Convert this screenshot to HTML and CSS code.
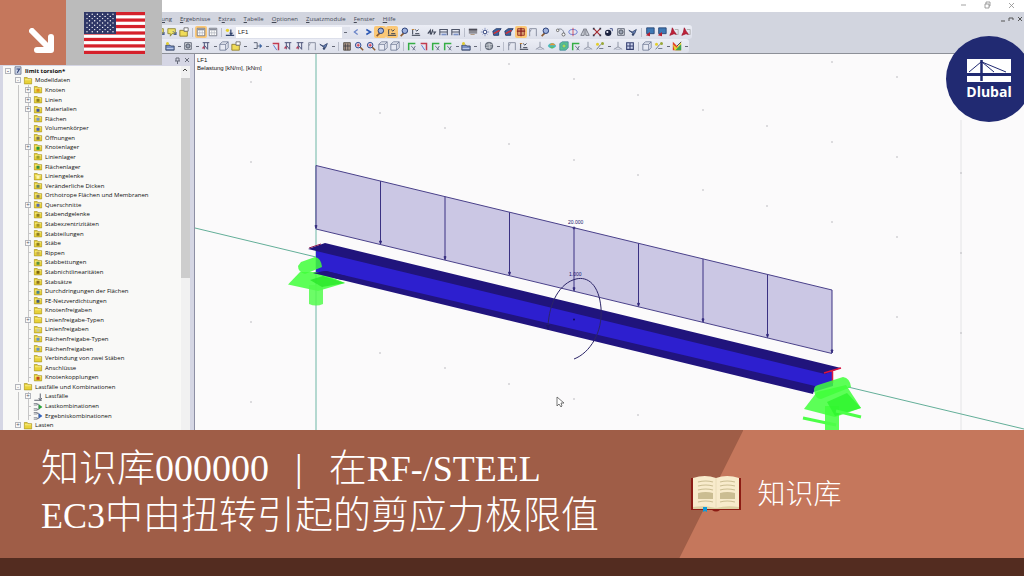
FILE: index.html
```
<!DOCTYPE html>
<html lang="zh-CN">
<head>
    <meta charset="UTF-8">
    <meta name="viewport" content="width=device-width, initial-scale=1.0">
    <title>知识库 | Dlubal</title>
    <link rel="stylesheet" href="styles.css">
</head>
<body>
    <svg class="sprite" aria-hidden="true">
        <symbol id="folder" viewBox="0 0 12 12"><path d="M1 2h4l1 1.500h5v7H1z" fill="#e8d23a" stroke="#a08a18" stroke-width=".8"/><path d="M2 5h8" stroke="#fff6a0"/></symbol>
        <symbol id="note" viewBox="0 0 12 12"><path d="M1 2h9v6H6l-2 3V8H1z" fill="#f0e468" stroke="#8a8430"/><path d="M7 5l4 4M11 6v3H8" stroke="#37508c" fill="none"/></symbol>
        <symbol id="open" viewBox="0 0 12 12"><path d="M1 4h4l1 1h4v6H1z" fill="#f0dc5a" stroke="#8c7a28"/><path d="M6 1h5v4H6z" fill="#fff" stroke="#666"/></symbol>
        <symbol id="table" viewBox="0 0 12 12"><path d="M1.500 1.500h9v9h-9z" fill="#fff" stroke="#6b6f7c"/><path d="M2 3h8" stroke="#8b8f9c" stroke-width="2"/><path d="M4.500 4v6M7.500 4v6M2 7h8" stroke="#a9adb8" stroke-width=".8"/></symbol>
        <symbol id="load" viewBox="0 0 12 12"><circle cx="3" cy="4" r="2" fill="#e8d028"/><path d="M1 10h10M7 3v6" stroke="#34466e" stroke-width="1.500"/><path d="M5 7l2 3 3-3z" fill="#34466e"/></symbol>
        <symbol id="prev" viewBox="0 0 12 12"><path d="M8 3L4 6l4 3" fill="none" stroke="#6a84c8" stroke-width="1.500"/></symbol>
        <symbol id="next" viewBox="0 0 12 12"><path d="M4 3l5 3-5 3" fill="none" stroke="#2c58b4" stroke-width="1.800"/></symbol>
        <symbol id="loupe" viewBox="0 0 12 12"><path d="M6 7l-4 4" stroke="#8a5a30" stroke-width="2"/><circle cx="7" cy="4.500" r="3.300" fill="#9fb2de" stroke="#293f78" stroke-width="1.200"/></symbol>
        <symbol id="zoomred" viewBox="0 0 12 12"><path d="M7 7l4 4" stroke="#8a5a30" stroke-width="1.800"/><circle cx="5" cy="5" r="3.300" fill="#e8edfb" stroke="#2c4890" stroke-width="1.200"/><path d="M3 5h4M5 3v4" stroke="#c9202c"/></symbol>
        <symbol id="values" viewBox="0 0 12 12"><path d="M1 10h10M2 3v6M5 3l2 2 2-2M5 8h5" stroke="#3d4454" fill="none" stroke-width="1.200"/><path d="M1 3h3" stroke="#c27820"/></symbol>
        <symbol id="frame" viewBox="0 0 12 12"><path d="M1 10V3h9v7M1 6h9" stroke="#4d5468" fill="none" stroke-width="1.300"/><path d="M3 9h6" stroke="#7c93c8" stroke-width="2"/></symbol>
        <symbol id="plate" viewBox="0 0 12 12"><path d="M1 3h10v5H1z" fill="#8c8c94"/><path d="M1 3h10" stroke="#4c4c58" stroke-width="2"/><path d="M3 9h5" stroke="#a88c70"/></symbol>
        <symbol id="portal" viewBox="0 0 12 12"><path d="M2 11V2h8v9M4 3l-2 3" fill="none" stroke="#8c92a4" stroke-width="1.200"/></symbol>
        <symbol id="text" viewBox="0 0 12 12"><path d="M1 8l3-4v5M7 3L5 9M7 6h3L8 9" stroke="#3f4658" fill="none" stroke-width="1.400"/></symbol>
        <symbol id="node" viewBox="0 0 12 12"><path d="M6 1v10M1 6h10M3 3l6 6M9 3L3 9" stroke="#7080b4" stroke-width=".9"/><circle cx="6" cy="6" r="2" fill="#fff" stroke="#35457c"/></symbol>
        <symbol id="solid" viewBox="0 0 12 12"><path d="M1 5l4-3h6l-3 4v4H2z" fill="#3a64a0" stroke="#203464"/><path d="M2 8l7-4" stroke="#d23034" stroke-width="1.800"/></symbol>
        <symbol id="section" viewBox="0 0 12 12"><path d="M2 2h8v8H2z" fill="#d8a070" stroke="#942820"/><path d="M1 5h10M6 1v10" stroke="#8c2020" stroke-width="1.500"/></symbol>
        <symbol id="building" viewBox="0 0 12 12"><path d="M2 2h8v9H2z" fill="#b09c8c" stroke="#4c443c"/><path d="M4 3v8M7 3v8M2 6h8" stroke="#3c3c44"/></symbol>
        <symbol id="link" viewBox="0 0 12 12"><path d="M2 3c5-2 7 1 8 6" fill="none" stroke="#666e80"/><circle cx="2" cy="4" r="1.500" fill="#fff" stroke="#555"/><circle cx="9" cy="9" r="1.800" fill="#fff" stroke="#555"/></symbol>
        <symbol id="orbit" viewBox="0 0 12 12"><ellipse cx="6" cy="6" rx="5" ry="3" fill="none" stroke="#5a6ed0"/><path d="M6 1v10" stroke="#d03c50"/></symbol>
        <symbol id="mirror" viewBox="0 0 12 12"><path d="M5 2v8H1zM7 2v8h4z" fill="#d8dbe4" stroke="#666a76"/></symbol>
        <symbol id="cross" viewBox="0 0 12 12"><path d="M2 2l8 8M10 2l-8 8" stroke="#a42a30" stroke-width="1.400"/><path d="M1 1h2v2H1zM9 1h2v2H9zM1 9h2v2H1zM9 9h2v2H9z" fill="#343848"/></symbol>
        <symbol id="ball" viewBox="0 0 12 12"><circle cx="5" cy="7" r="3.800" fill="#1b2340"/><circle cx="4" cy="6" r="1.300" fill="#f2f4ff"/><path d="M7 2h3v3" fill="none" stroke="#2c3c7c"/></symbol>
        <symbol id="sphere" viewBox="0 0 12 12"><circle cx="6" cy="6" r="4.500" fill="#8c929c" stroke="#4c5464"/><path d="M2 5l8-1M6 2l1 8M2 8l7-1" stroke="#c8ccd4"/></symbol>
        <symbol id="gear" viewBox="0 0 12 12"><path d="M2 2h8v8H2z" fill="#d7dae2" stroke="#555c6c"/><circle cx="6" cy="6" r="2.500" fill="#9ca4b4" stroke="#3f4656"/></symbol>
        <symbol id="birds" viewBox="0 0 12 12"><path d="M1 4l4 2 5-3-2 5-3-1z" fill="#6882ba" stroke="#34466c"/><circle cx="6" cy="9" r="1.500" fill="#34466c"/></symbol>
        <symbol id="screen" viewBox="0 0 12 12"><path d="M2 1h9v7H2z" fill="#3e78b4" stroke="#244070"/><path d="M1 10l5-4v5z" fill="#b82030"/></symbol>
        <symbol id="flagred" viewBox="0 0 12 12"><path d="M4 1l2 4 3 4-3-1-5 2 2-4z" fill="#c22038" stroke="#a01830"/><path d="M7 3h4v6H9" fill="none" stroke="#a8a8a8"/></symbol>
        <symbol id="cube" viewBox="0 0 12 12"><path d="M1 4l3-3h7v7l-3 3H1zM1 4h7v7M8 4l3-3" fill="#e8eaf4" stroke="#6f7894"/></symbol>
        <symbol id="axis" viewBox="0 0 12 12"><path d="M2 11V3h8" fill="none" stroke="#35ae45" stroke-width="1.800"/><path d="M5 6l5 5M10 6l-3 5" stroke="#555f78"/></symbol>
        <symbol id="axisred" viewBox="0 0 12 12"><path d="M2 3h7v8" fill="none" stroke="#c23c50" stroke-width="1.800"/><path d="M3 5l4 6" stroke="#466ccc"/></symbol>
        <symbol id="surface" viewBox="0 0 12 12"><path d="M1 5h5l1 1h4v5H1z" fill="#7890c4" stroke="#33405c"/><path d="M2 9h8" stroke="#c8d4ee"/><circle cx="3" cy="3" r="1.800" fill="#e0cc30"/></symbol>
        <symbol id="support" viewBox="0 0 12 12"><path d="M2 2h8M4 2v8M8 2v8M4 5l4 5" fill="none" stroke="#50577c" stroke-width="1.200"/><path d="M1 9l2-3 2 3z" fill="#b73d58"/></symbol>
        <symbol id="arrows" viewBox="0 0 12 12"><path d="M1 2h4v7H1M5 6h5" fill="none" stroke="#626a7c" stroke-width="1.200"/><path d="M8 3l3 3-3 3z" fill="#3e66a2"/></symbol>
        <symbol id="grid" viewBox="0 0 12 12"><path d="M2 2h8v8H2zM6 2v8M2 6h8" fill="#cdd4ee" stroke="#353f70" stroke-width="1.300"/></symbol>
        <symbol id="result" viewBox="0 0 12 12"><path d="M1 6c2-5 8-5 10 0-2 4-8 4-10 0z" fill="#44bcc0"/><path d="M3 5c2-3 5-3 7 0z" fill="#e4963c"/><path d="M3 7h6l-3 2z" fill="#6cbd48"/></symbol>
        <symbol id="resultbox" viewBox="0 0 12 12"><path d="M1 3l3-2h7v7l-3 3H1z" fill="#58c48c" stroke="#4888a0"/><circle cx="6" cy="6" r="2.500" fill="#a8d858" stroke="#3c9cac"/></symbol>
        <symbol id="xyz" viewBox="0 0 12 12"><path d="M6 1v6l-5 3M6 7l5 3" fill="none" stroke="#818799"/><path d="M3 10h6" stroke="#a9b1c2"/></symbol>
        <symbol id="spark" viewBox="0 0 12 12"><path d="M2 10l5-6M5 9h5" stroke="#606a7e"/><circle cx="3" cy="4" r="1.800" fill="#e4ce2c"/><circle cx="9" cy="3" r="1.800" fill="#98a838"/></symbol>
        <symbol id="color" viewBox="0 0 12 12"><path d="M1 1v10h10z" fill="#e03828"/><path d="M1 4l5 4 5-7v10H3z" fill="#e4d334"/><path d="M4 11l7-7v7z" fill="#3ca254"/><path d="M6 6l5-5" stroke="#333"/></symbol>
        <symbol id="model" viewBox="0 0 12 12"><path d="M2 1h8v10H2z" fill="#c9d2e6" stroke="#626b84"/><path d="M4 4h4L5 9" fill="none" stroke="#2c3f73" stroke-width="1.500"/></symbol>
        <symbol id="lf" viewBox="0 0 12 12"><path d="M1 11h10M9 2v7M7 8l2 3 2-3" fill="none" stroke="#4c5160" stroke-width="1.200"/></symbol>
        <symbol id="combo" viewBox="0 0 12 12"><path d="M0 2h5v2H0M0 9h5v2H0M5 3h2v7H5" fill="none" stroke="#6c717c"/><path d="M7 3l5 3.500L7 10z" fill="#2aa23c"/></symbol>
        <symbol id="combo2" viewBox="0 0 12 12"><path d="M0 2h5v2H0M0 9h5v2H0M5 3h2v7H5" fill="none" stroke="#6c717c"/><path d="M7 3l5 3.500L7 10z" fill="#3262bc"/></symbol>
    </svg>

    <main class="page">
        <section class="app">
            <header class="titlebar">
                <svg class="window-icons" viewBox="0 0 56 10" fill="none" stroke="#8c8c8c" stroke-width=".8"><path d="M1 5h5M25 4h4v4h-4zM26 4V2h4v4h-1M49 3l5 5M54 3l-5 5"/></svg>
            </header>
            <nav class="menubar">
                <button>Berechn<u>u</u>ng</button>
                <button><u>E</u>rgebnisse</button>
                <button>E<u>x</u>tras</button>
                <button><u>T</u>abelle</button>
                <button><u>O</u>ptionen</button>
                <button><u>Z</u>usatzmodule</button>
                <button><u>F</u>enster</button>
                <button><u>H</u>ilfe</button>
                <svg class="child-icons" viewBox="0 0 24 8" fill="none" stroke="#555"><path d="M1 6h4M9 6V3h4v2M18 2l4 4M22 2l-4 4"/></svg>
            </nav>
            <div class="toolbars">
                <div class="toolbar toolbar-main">
                    <span class="tools" data-tools="note note open | *table table | load"></span>
                    <select class="loadcase" aria-label="Lastfall"><option>LF1</option></select>
                    <span class="tools" data-tools="prev next *loupe *values loupe values : text frame frame | plate node solid solid *section portal loupe : link orbit mirror cross ball gear birds | screen screen flagred flagred"></span>
                </div>
                <div class="toolbar">
                    <span class="tools" data-tools="surface> gear> support> cube open> : arrows> axisred support support portal birds> | building zoomred zoomred cube cube | axis axisred axis axis> surface> | sphere> | portal values : xyz result resultbox axis xyz spark> xyz grid | cube spark> color>"></span>
                </div>
            </div>
            <div class="workspace">
                <aside class="navigator">
                    <div class="navigator-head">
                        <svg viewBox="0 0 16 8" fill="none" stroke="#666a78"><path d="M1 5h5M2 5V2h3v3M3.500 5v3M11 2l4 4M15 2l-4 4"/></svg>
                    </div>
                    <div class="navigator-body">
                        <ul class="tree" id="tree"></ul>
                        <div class="scrollbar">
                            <svg viewBox="0 0 8 8" fill="none" stroke="#444"><path d="M2 5l2-2 2 2"/></svg>
                            <div class="thumb"></div>
                        </div>
                    </div>
                </aside>
                <div class="canvas">
                    <svg class="scene" viewBox="195 54 829 376" preserveAspectRatio="xMinYMin slice">
                        <path d="M316 54v376" stroke="#9ccdc2" stroke-width="1.500"/>
                        <path d="M961 120v310" stroke="#e4e4e6"/>
                        <path d="M195 228l121 29M848 387l176 42" stroke="#63ae98"/>
                        <g id="dots" fill="#b4b4b8"></g>

                        <path d="M316 165.500l516 124.500v63.500L316 229z" fill="#cbc7e4"/>
                        <g id="load-arrows" stroke="#3a3182" fill="#1c146c"></g>
                        <path d="M316 165.500l516 124.500M316 229l516 124.500" stroke="#4a418a"/>

                        <path d="M316 250l517 122v14l-20 6-497-120z" fill="#2d1fcf"/>
                        <path d="M313 273l13-2 489 115-2 8z" fill="#21147e"/>
                        <path d="M308 249l17-6 516 125-16 6z" fill="#20147c"/>
                        <path d="M309 248l12-4" stroke="#8e1c50"/>
                        <path d="M824 373l17-5M832.500 371v12" stroke="#dc1440" stroke-width="1.500"/>

                        <g fill="#3fff3a" fill-opacity=".85">
                            <path d="M300 272l-12 12.500 30 6.500 27-8-26-11z"/>
                            <path d="M309 285h14v19q-7 3-14 0z" fill="#52fb4c"/>
                            <path d="M301 262l14-5q6 1 7 10l-17 7q-7-2-7-8z"/>
                            <path d="M310 280l12 7 23-4-22-7z" fill="#2be82a"/>
                            <path d="M817 392l-13 17 31 8 26-9-15-23z"/>
                            <path d="M825 406h14v24h-14z"/>
                            <path d="M814 390q0-4 4-5l25-8q7 1 8 10l-30 12q-6 0-7-9z"/>
                            <path d="M827 402l20-9 14 15-26 8z" fill="#2ff62e"/>
                        </g>
                        <path d="M803 418l33 7M836 411l25 6" stroke="#4dff48" stroke-width="3"/>
                        <path d="M313 273l13-2 20 5-4 4z" fill="#21147e"/>

                        <path d="M574 359C590 353 603 332 601 308C599 285 588 276 576 279C560 283 549 302 548 327" fill="none" stroke="#2c2568"/>
                        <path d="M546 325h4l-2 5z" fill="#1c146c"/>
                        <circle cx="574" cy="319.500" r="1" fill="#120a58"/>
                        <text x="568" y="224">20.000</text>
                        <text x="569" y="276">1.000</text>
                        <path d="M557 397v9l2-2 2 3 1-1-1-3h3z" fill="#fff" stroke="#555" stroke-width=".8"/>
                    </svg>
                    <p class="canvas-info">LF1<br>Belastung [kN/m], [kNm]</p>
                </div>
            </div>
        </section>

        <section class="banner">
            <div class="banner-title">
                <h1>知识库000000<span class="bar">|</span>在<span class="latin">RF-/STEEL</span><br><span class="latin">EC3</span>中由扭转引起的剪应力极限值</h1>
            </div>
            <div class="banner-category">
                <svg class="book" viewBox="0 0 50 36">
                    <path d="M0 2h50v32H29q-4 3-8 0H0z" fill="#8c1c14"/>
                    <path d="M2 2q12-4 23 0 11-4 23 0v31q-12-2-23 0-11-2-23 0z" fill="#f8ebcc"/>
                    <path d="M2 31q12-2 23 1 11-3 23-1v2H2z" fill="#ddd0a4"/>
                    <path d="M25 2v30" stroke="#eadcb8"/>
                    <path d="M7 6q8-2 15 0M7 10q8-2 15 0M7 14q8-2 15 0M7 26q8-2 15 0M29 6q7-2 15 0M29 10q7-2 15 0M29 14q7-2 15 0M29 26q7-2 15 0" fill="none" stroke="#cbbd92" stroke-width="1.200"/>
                    <path d="M7 17q8-2 15 0v6H7zM29 17q7-2 15 0v6H29z" fill="#cbbd92"/>
                    <path d="M12 31h4v5l-2-1-2 1z" fill="#0d9ad8"/>
                </svg>
                <span>知识库</span>
            </div>
        </section>
        <footer class="footer"></footer>

        <div class="badges">
            <div class="arrow-tile">
                <svg viewBox="0 0 26 26" fill="none" stroke="#fff" stroke-width="6" stroke-linecap="round" stroke-linejoin="round"><path d="M3 3l18 18M22 9v13H8"/></svg>
            </div>
            <div class="flag-tile">
                <svg viewBox="0 0 61 42">
                    <path d="M0 0h61v42H0z" fill="#fff"/>
                    <g id="stripes" fill="#d5212b"></g>
                    <path d="M0 0h32v22H0z" fill="#2f3766"/>
                    <g id="stars" fill="#fff"></g>
                </svg>
            </div>
        </div>
        <div class="logo">
            <svg viewBox="0 0 44 23">
                <path d="M0 0h44v14H0zM0 17h44v6H0z" fill="#fff"/>
                <path d="M14.500 1v21" stroke="#212a72" stroke-width="2.500"/>
                <path d="M14 3L2 13M15 3l12 10M15 3l24 10" fill="none" stroke="#212a72"/>
            </svg>
            <span>Dlubal</span>
        </div>
    </main>

    <script>
        // level, toggle, icon, label, mark colour
        const nodes = [
            [0, '-', 'model', 'limit torsion*'],
            [1, '-', 'folder', 'Modelldaten'],
            [2, '+', 'folder', 'Knoten', '#e09020'],
            [2, '+', 'folder', 'Linien', '#8c7c20'],
            [2, '+', 'folder', 'Materialien', '#44549c'],
            [2, '', 'folder', 'Flächen', '#7c94c0'],
            [2, '', 'folder', 'Volumenkörper', '#4a5eb4'],
            [2, '', 'folder', 'Öffnungen', '#77745c'],
            [2, '+', 'folder', 'Knotenlager', '#24963c'],
            [2, '', 'folder', 'Linienlager', '#98a030'],
            [2, '', 'folder', 'Flächenlager', '#308a48'],
            [2, '', 'folder', 'Liniengelenke', '#f8f4b4'],
            [2, '', 'folder', 'Veränderliche Dicken', '#648064'],
            [2, '', 'folder', 'Orthotrope Flächen und Membranen', '#807c60'],
            [2, '+', 'folder', 'Querschnitte', '#5568b4'],
            [2, '', 'folder', 'Stabendgelenke', '#8c7c20'],
            [2, '', 'folder', 'Stabexzentrizitäten', '#a49428'],
            [2, '', 'folder', 'Stabteilungen', '#8c7c20'],
            [2, '+', 'folder', 'Stäbe', '#8c7c20'],
            [2, '', 'folder', 'Rippen', '#c0a850'],
            [2, '', 'folder', 'Stabbettungen', '#5a9040'],
            [2, '', 'folder', 'Stabnichtlinearitäten', '#7c6410'],
            [2, '', 'folder', 'Stabsätze', '#8c7020'],
            [2, '', 'folder', 'Durchdringungen der Flächen', '#468094'],
            [2, '', 'folder', 'FE-Netzverdichtungen', '#445c78'],
            [2, '', 'folder', 'Knotenfreigaben'],
            [2, '+', 'folder', 'Linienfreigabe-Typen'],
            [2, '', 'folder', 'Linienfreigaben', '#c8c8a0'],
            [2, '', 'folder', 'Flächenfreigabe-Typen', '#6892c4'],
            [2, '', 'folder', 'Flächenfreigaben', '#6892c4'],
            [2, '', 'folder', 'Verbindung von zwei Stäben'],
            [2, '', 'folder', 'Anschlüsse'],
            [2, '', 'folder', 'Knotenkopplungen', '#c04820'],
            [1, '-', 'folder', 'Lastfälle und Kombinationen'],
            [2, '+', 'lf', 'Lastfälle'],
            [2, '', 'combo', 'Lastkombinationen'],
            [2, '', 'combo2', 'Ergebniskombinationen'],
            [1, '+', 'folder', 'Lasten']
        ];
        document.getElementById('tree').innerHTML = nodes.map(([level, toggle, icon, label, mark]) => `
            <li class="level-${level}">
                <span class="${toggle ? 'toggle' : 'branch'}">${toggle}</span>
                <svg class="tree-icon" viewBox="0 0 12 12"><use href="#${icon}"/>${mark ? `<path d="M4 5h4v4H4z" fill="${mark}"/>` : ''}</svg>
                <span>${label}</span>
            </li>`).join('');

        // * pressed, > with drop-down arrow, | and : separators
        document.querySelectorAll('.tools').forEach(el => {
            el.innerHTML = el.dataset.tools.split(' ').map(name => {
                if (name === '|') return '<i class="sep"></i>';
                if (name === ':') return '<i class="gap"></i>';
                const icon = name.replace(/[*>]/g, '');
                const cls = name.startsWith('*') ? 'tool pressed' : 'tool';
                const arrow = name.endsWith('>') ? '<i class="drop"></i>' : '';
                return `<button class="${cls}" aria-label="${icon}"><svg viewBox="0 0 12 12"><use href="#${icon}"/></svg></button>${arrow}`;
            }).join('');
        });

        let arrows = '';
        for (let i = 0; i <= 8; i++) {
            const x = 316 + i * 64.5;
            const y = 165.5 + i * 15.56;
            arrows += `<path d="M${x} ${y}v63"/><path d="M${x - 1} ${y + 60}h2l-1 3z"/>`;
        }
        arrows += '<circle cx="574" cy="228" r="1"/>';
        document.getElementById('load-arrows').innerHTML = arrows;

        const dots = [[251, 82], [251, 162], [251, 322], [251, 402], [380, 113], [380, 353], [445, 128], [445, 368],
            [509, 64], [509, 144], [509, 384], [574, 79], [574, 160], [574, 399], [638, 95], [638, 175], [638, 415],
            [703, 110], [703, 190], [767, 126], [767, 206], [832, 62], [832, 142], [832, 222],
            [897, 77], [897, 157], [897, 237], [897, 317], [961, 173], [961, 253], [961, 333]];
        document.getElementById('dots').innerHTML = dots.map(([x, y]) => `<circle cx="${x}" cy="${y}" r=".8"/>`).join('');

        let stripes = '';
        for (let i = 0; i < 13; i += 2) {
            stripes += `<rect y="${i * 42 / 13}" width="61" height="${42 / 13}"/>`;
        }
        document.getElementById('stripes').innerHTML = stripes;

        let stars = '';
        for (let row = 0; row < 9; row++) {
            for (let col = 0; col < (row % 2 ? 5 : 6); col++) {
                stars += `<circle cx="${(row % 2 ? 5.5 : 3) + col * 5.2}" cy="${2.2 + row * 2.2}" r=".7"/>`;
            }
        }
        document.getElementById('stars').innerHTML = stars;
    </script>
</body>
</html>
```
FILE: styles.css
```
* {
    box-sizing: border-box;
}
body {
    margin: 0;
    font-family: "Open Sans", "Noto Sans CJK SC", sans-serif;
    color: #111;
}
button {
    padding: 0;
    border: none;
    background: none;
    font: inherit;
    color: inherit;
    cursor: pointer;
}
.sprite {
    display: none;
}
.page {
    position: relative;
    display: flex;
    flex-direction: column;
    height: 100vh;
    overflow: hidden;
}
.app {
    flex: 1;
    min-height: 0;
    display: flex;
    flex-direction: column;
    background: #d2d5df;
}

/* window bars */
.titlebar {
    display: flex;
    justify-content: flex-end;
    height: 12px;
    padding: 0 8px;
    background: #fff;
}
.window-icons {
    width: 56px;
    height: 10px;
}
.menubar {
    display: flex;
    align-items: center;
    gap: 8px;
    height: 13px;
    padding-left: 138px;
    font-size: 6px;
    color: #444956;
}
.menubar u {
    text-underline-offset: 1px;
}
.child-icons {
    width: 24px;
    height: 8px;
    margin-left: auto;
}
.toolbars {
    border-bottom: 1px solid #8d9098;
}
.toolbar {
    display: flex;
    align-items: center;
    width: max-content;
    height: 14px;
    padding-left: 164px;
    background: linear-gradient(#eceef6, #dcdfea);
    border-radius: 0 3px 3px 0;
}
.toolbar-main {
    padding-left: 154px;
}
.tools {
    display: flex;
    align-items: center;
}
.tool {
    display: flex;
    justify-content: center;
    align-items: center;
    width: 12px;
    height: 12px;
}
.tool svg {
    width: 10px;
    height: 10px;
}
.tool.pressed {
    background: #fbc877;
    border-radius: 2px;
}
.sep {
    width: 1px;
    height: 9px;
    margin: 0 2px;
    background: #b9bdca;
}
.gap {
    width: 4px;
}
.drop {
    width: 6px;
    height: 2px;
    background: linear-gradient(#666a78, #666a78) center / 3px 1px no-repeat;
}
.loadcase {
    width: 114px;
    height: 11px;
    padding: 0 2px;
    border: none;
    border-radius: 0;
    appearance: none;
    background:
        linear-gradient(#666a78, #666a78) right 3px center / 3px 1px no-repeat,
        linear-gradient(#dfe2ec, #dfe2ec) right / 8px 100% no-repeat,
        #fff;
    font-family: "Liberation Sans", sans-serif;
    font-size: 6px;
    color: #222;
}

/* navigator */
.workspace {
    flex: 1;
    min-height: 0;
    display: flex;
}
.navigator {
    flex: 0 0 195px;
    display: flex;
    flex-direction: column;
    padding: 0 4px 0 3px;
    border-right: 1px solid #8d8fa4;
    background: #d5d6e4;
}
.navigator-head {
    display: flex;
    justify-content: flex-end;
    align-items: center;
    height: 12px;
}
.navigator-head svg {
    width: 16px;
    height: 8px;
}
.navigator-body {
    flex: 1;
    min-height: 0;
    display: flex;
    background: #f9f9f7;
}
.tree {
    flex: 1;
    min-width: 0;
    display: grid;
    grid-auto-rows: minmax(0, 1fr);
    margin: 0;
    padding: 0;
    list-style: none;
    font-size: 6px;
    line-height: 8px;
    white-space: nowrap;
}
.tree li {
    display: flex;
    align-items: center;
    gap: 2px;
}
.level-0 {
    padding-left: 2px;
    font-weight: bold;
}
.level-1 {
    padding-left: 12px;
}
.level-2 {
    padding-left: 22px;
    background:
        linear-gradient(#c6c6c6, #c6c6c6) 15px 0 / 1px 100% no-repeat,
        linear-gradient(#c6c6c6, #c6c6c6) 25px 0 / 1px 100% no-repeat;
}
.toggle {
    width: 6px;
    height: 6px;
    border: 1px solid #b4b6bc;
    background: #f9f9f7;
    font-size: 6px;
    line-height: 4px;
    text-align: center;
    color: #556;
}
.branch {
    width: 6px;
    height: 1px;
    background: linear-gradient(#c6c6c6, #c6c6c6) 3px 0 / 3px 1px no-repeat;
}
.tree-icon {
    width: 10px;
    height: 9px;
}
.scrollbar {
    display: flex;
    flex-direction: column;
    gap: 4px;
    width: 9px;
    background: #f1f1f1;
}
.scrollbar svg {
    width: 8px;
    height: 8px;
}
.thumb {
    height: 55%;
    background: #cdcdcd;
}

/* model view */
.canvas {
    position: relative;
    flex: 1;
    min-width: 0;
    background: #fbfafb;
}
.scene {
    display: block;
    width: 100%;
    height: 100%;
}
.scene text {
    font-family: "Liberation Sans", sans-serif;
    font-size: 5px;
    fill: #1c146c;
}
.canvas-info {
    position: absolute;
    top: 2px;
    left: 2px;
    margin: 0;
    font-family: "Liberation Sans", sans-serif;
    font-size: 6px;
    line-height: 8px;
}

/* banner */
.banner {
    display: flex;
    height: 128px;
    background: #c5775c;
    color: #fff;
}
.banner-title {
    flex: 0 0 auto;
    width: 72.6%;
    display: flex;
    align-items: center;
    padding-left: 41px;
    padding-bottom: 4px;
    background: #9f5d47;
    clip-path: polygon(0 0, 100% 0, calc(100% - 64px) 100%, 0 100%);
}
.banner h1 {
    margin: 0;
    font-family: "Liberation Serif", "Noto Sans CJK SC", serif;
    font-size: 38px;
    font-weight: 300;
    line-height: 46px;
    white-space: nowrap;
}
.latin {
    font-size: 36px;
}
.bar {
    padding: 0 26px;
}
.banner-category {
    position: relative;
    display: flex;
    align-items: center;
    gap: 16px;
    margin-left: -52px;
    padding-bottom: 4px;
    font-family: "Noto Sans CJK SC", sans-serif;
    font-size: 28px;
    font-weight: 300;
}
.book {
    width: 50px;
    height: 36px;
    margin-top: 4px;
}
.footer {
    height: 18px;
    background: #532c20;
}

/* corner badges */
.badges {
    position: absolute;
    top: 0;
    left: 0;
    display: flex;
    height: 65px;
}
.arrow-tile {
    display: flex;
    justify-content: flex-end;
    align-items: flex-end;
    width: 66px;
    padding: 11px;
    background: #c5775c;
}
.arrow-tile svg {
    width: 26px;
    height: 26px;
}
.flag-tile {
    display: flex;
    justify-content: center;
    align-items: center;
    width: 96px;
    background: #bbb;
}
.flag-tile svg {
    width: 61px;
    height: 42px;
}
.logo {
    position: absolute;
    top: 36px;
    right: -8px;
    display: flex;
    flex-direction: column;
    align-items: center;
    width: 86px;
    height: 86px;
    padding-top: 23px;
    border-radius: 50%;
    background: #212a72;
    color: #fff;
    font-size: 14px;
    font-weight: bold;
    line-height: 20px;
}
.logo svg {
    width: 44px;
    height: 23px;
}
```
